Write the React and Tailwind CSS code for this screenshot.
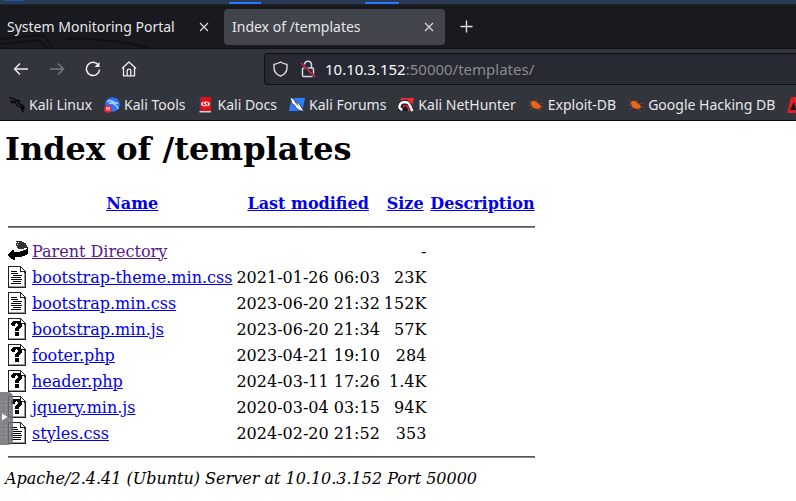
import React from "react";

const bookmarks = [
  { label: "Kali Linux", icon: "dragon" },
  { label: "Kali Tools", icon: "tools" },
  { label: "Kali Docs", icon: "docs" },
  { label: "Kali Forums", icon: "forums" },
  { label: "Kali NetHunter", icon: "nethunter" },
  { label: "Exploit-DB", icon: "bug" },
  { label: "Google Hacking DB", icon: "bug" },
];

const files = [
  { name: "bootstrap-theme.min.css", date: "2021-01-26 06:03", size: "23K", kind: "text" },
  { name: "bootstrap.min.css", date: "2023-06-20 21:32", size: "152K", kind: "text" },
  { name: "bootstrap.min.js", date: "2023-06-20 21:34", size: "57K", kind: "unknown" },
  { name: "footer.php", date: "2023-04-21 19:10", size: "284", kind: "unknown" },
  { name: "header.php", date: "2024-03-11 17:26", size: "1.4K", kind: "unknown" },
  { name: "jquery.min.js", date: "2020-03-04 03:15", size: "94K", kind: "unknown" },
  { name: "styles.css", date: "2024-02-20 21:52", size: "353", kind: "text" },
];

function BookmarkIcon({ kind }) {
  const common = { width: 16, height: 16, viewBox: "0 0 16 16", className: "shrink-0", "aria-hidden": true };
  if (kind === "dragon") {
    return (
      <svg {...common}>
        <path d="M0 1C3 .6 6 1.500 8 3.500L11.500 4.200M1 4.800 5 3.200M2.500 6.300 6.500 4.200M7.500 3.500C5.500 5.500 6.500 8.500 10 9.300 13 9.700 14.800 11 15 13.300M9.500 4C8 6 10 7 11.500 7.300 14 7.800 14.800 9 15.300 11M11.500 10C13 11.500 13.500 13.500 14 15.500" fill="none" stroke="#050608" strokeWidth="1.300" />
      </svg>
    );
  }
  if (kind === "tools") {
    return (
      <svg {...common}>
        <circle cx="8.500" cy="7.500" r="7.300" fill="#2777ff" />
        <path d="M3 4.500C6 3 8.500 4 10 5.500L14 6.500M5 6.500 9 5.500C9 8.500 14 7.500 14 12" fill="none" stroke="#c9dcff" strokeWidth="1.300" />
        <circle cx="3.800" cy="12" r="3.800" fill="#ee2233" />
        <path d="M2 10.800H5.800M3 10.800V13.500M5 10.800V13.500" stroke="#fff" strokeWidth=".9" />
      </svg>
    );
  }
  if (kind === "docs") {
    return (
      <svg {...common}>
        <path d="M2 0H13V14H2Z" fill="#e01218" />
        <path d="M1 0H2.300V14.500H1Z" fill="#203a80" />
        <path d="M1.500 14H13V15.500H1.500Z" fill="#d9d4d4" />
        <path d="M5.500 5 3.500 7 5.500 9M9.500 5 11.500 7 9.500 9M8.800 5.200C5.800 4.800 6.500 6.600 7.500 7S9 9.200 6.200 8.800" fill="none" stroke="#fff" strokeWidth="1.100" />
      </svg>
    );
  }
  if (kind === "forums") {
    return (
      <svg {...common}>
        <path d="M2.500 1H16L13.500 14H0Z" fill="#2b7cff" />
        <path d="M.5 0C3 1 5 2 6.500 4.500L9.500 6.500C12 8 12 11 15.500 14.500L11 13.500C9 12.500 7 11.500 6 9L3 6.500C2 5 2.500 3 .5 0Z" fill="#fff" stroke="#182238" strokeWidth=".8" />
        <path d="M6 4.800 9 8.500" stroke="#222" strokeWidth=".8" />
      </svg>
    );
  }
  if (kind === "nethunter") {
    return (
      <svg {...common}>
        <path d="M3 1H16L13 13.500H0Z" fill="#f02a3a" />
        <path d="M0 7C2 3 6 2 9 3L14 7 11 14H0Z" fill="#15161b" />
        <path d="M4.500 12.800C-.5 12 1 5.500 6.500 5 12 5 11.500 9.500 14.500 14" fill="none" stroke="#fff" strokeWidth="2.400" />
        <path d="M5 10.500C5 8 9 7.500 10 10.500L11 14" fill="none" stroke="#f02a3a" strokeWidth="1.500" />
      </svg>
    );
  }
  return (
    <svg {...common}>
      <path d="M2.500 5.500C4 3.500 7.500 3.500 9.500 6L12.500 8.500 13 10.500 10.500 12C7 12 4.500 11 3.500 8.500Z" fill="#ed6418" />
      <path d="M4 6 1 3M4 8 .5 8.500M5 10 1.500 12.500M9 6 8 2.500M11 7 15 6M12.500 9.500 15.500 10M10 11.500 13 14" stroke="#9c4a24" strokeWidth=".7" fill="none" />
    </svg>
  );
}

function PageShape({ children }) {
  return (
    <svg width="20" height="22" viewBox="0 0 20 22" shapeRendering="crispEdges" className="block" aria-hidden="true">
      <path d="M0 0H13V1H14V2H15V3H16V4H17V5H18V22H0Z" fill="#222" />
      <path d="M1 1H12V6H16V20H1Z" fill="#fff" />
      <path d="M13 2H14V3H15V4H16V5H13Z" fill="#fff" />
      <path d="M16 7H17V21H1V20H16Z" fill="#999" />
      {children}
    </svg>
  );
}

function FileIcon({ kind }) {
  if (kind === "text") {
    return (
      <PageShape>
        <path d="M3 5H9V6H3ZM3 7H10V8H3ZM5 9H14V10H5ZM3 11H13V12H3ZM3 13H14V14H3ZM5 15H13V16H5ZM3 17H13V18H3Z" fill="#000" />
      </PageShape>
    );
  }
  if (kind === "unknown") {
    return (
      <PageShape>
        <path d="M5 3H12V4H13V5H14V9H13V10H12V11H11V13H7V10H8V9H9V8H10V6H9V5H8V6H7V8H4V7H3V5H4V4H5ZM7 14H11V18H7Z" fill="#000" />
      </PageShape>
    );
  }
  return (
    <svg width="20" height="22" viewBox="0 0 20 22" shapeRendering="crispEdges" className="block" aria-hidden="true">
      <path d="M8 1H14V2H16V3H18V5H19V8H16V9H10V8H9V7H8Z" fill="#333" />
      <path d="M8 2H9V3H8ZM9 4H10V5H9ZM8 6H9V7H8ZM10 2H11V3H10Z" fill="#fff" />
      <path d="M20 7V14H19V15H17V16H14V17H7V20H5V19H3V18H2V17H1V16H0V14H1V13H2V12H3V11H4V10H6V12H12V11H15V10H18V9H19V7Z" fill="#000" />
    </svg>
  );
}

function CloseIcon() {
  return (
    <svg width="10" height="10" viewBox="0 0 10 10" aria-hidden="true">
      <path d="M1 1 9 9M9 1 1 9" stroke="#dedee2" strokeWidth="1.100" />
    </svg>
  );
}

function TabBar() {
  return (
    <div className="relative flex h-11 items-center overflow-hidden border-b border-[#0e0f12] bg-[#191a1f] text-sm text-[#e6e6ea]">
      <svg width="220" height="16" viewBox="0 0 220 16" className="absolute bottom-0 left-0" aria-hidden="true">
        <path d="M0 7 44 3 52 16M0 12 38 8 48 16M66 7C95 6 125 10 150 16" fill="none" stroke="#101115" strokeWidth="2" />
      </svg>
      <div className="relative flex w-56 shrink-0 items-center justify-between pr-[15px] pl-[7px]">
        <span>System Monitoring Portal</span>
        <button type="button" aria-label="Close System Monitoring Portal"><CloseIcon /></button>
      </div>
      <div className="relative flex h-9 w-[221px] shrink-0 items-center justify-between rounded-[4px] bg-[#42444b] pr-[11px] pl-2">
        <span>Index of /templates</span>
        <button type="button" aria-label="Close Index of /templates"><CloseIcon /></button>
      </div>
      <button type="button" aria-label="New tab" className="ml-[15px]">
        <svg width="13" height="13" viewBox="0 0 13 13" className="block" aria-hidden="true">
          <path d="M6.500 .5V12.500M.5 6.500H12.500" stroke="#e6e6ea" strokeWidth="1.300" />
        </svg>
      </button>
    </div>
  );
}

function NavBar() {
  return (
    <div className="flex h-10 items-center pl-[13px]">
      <div className="flex w-[251px] shrink-0 items-center gap-5 text-[#f0f0f3]">
        <button type="button" aria-label="Back">
          <svg width="16" height="16" viewBox="0 0 16 16" fill="none" stroke="currentColor" strokeWidth="1.400" className="block"><path d="M15 8H1.500M7 2.500 1.500 8 7 13.500" /></svg>
        </button>
        <button type="button" aria-label="Forward" className="text-[#777980]">
          <svg width="16" height="16" viewBox="0 0 16 16" fill="none" stroke="currentColor" strokeWidth="1.400" className="block"><path d="M1 8H14.500M9 2.500 14.500 8 9 13.500" /></svg>
        </button>
        <button type="button" aria-label="Reload">
          <svg width="16" height="16" viewBox="0 0 16 16" fill="none" stroke="currentColor" strokeWidth="1.500" className="block"><path d="M13.500 4.200A6.600 6.600 0 1 0 14.600 8.500" /><path d="M14.500 1V6H9.500Z" fill="currentColor" stroke="none" /></svg>
        </button>
        <button type="button" aria-label="Home">
          <svg width="16" height="16" viewBox="0 0 16 16" fill="none" stroke="currentColor" strokeWidth="1.300" strokeLinejoin="round" className="block"><path d="M1 7.500 8 1 15 7.500M2.500 6.500V14.800H13.500V6.500" /><path d="M6.200 14.800V9.500Q6.200 8.200 8 8.200T9.800 9.500V14.800" /></svg>
        </button>
      </div>
      <div className="flex h-8 flex-1 items-center rounded-l-[4px] border border-r-0 border-[#101116] bg-[#272933] pl-2">
        <svg width="15" height="16" viewBox="0 0 15 16" fill="none" stroke="#e6e6ea" strokeWidth="1.300" strokeLinejoin="round" className="shrink-0" aria-hidden="true">
          <path d="M7.500 1C5.500 2.300 3.500 3 1 3.400V6.500C1 10.500 3.200 13.500 7.500 15.200 11.800 13.500 14 10.500 14 6.500V3.400C11.500 3 9.500 2.300 7.500 1Z" />
        </svg>
        <svg width="16" height="18" viewBox="0 0 16 18" fill="none" className="ml-3 shrink-0" aria-hidden="true">
          <path d="M4.500 8V5C4.500 0 11.500 0 11.500 5V8M3.500 8H12.500Q13.500 8 13.500 9V15.500Q13.500 16.500 12.500 16.500H3.500Q2.500 16.500 2.500 15.500V9Q2.500 8 3.500 8Z" stroke="#d8d8dd" strokeWidth="1.500" />
          <path d="M1 3 15 17" stroke="#272933" strokeWidth="3" />
          <path d="M1 3 15 17" stroke="#e22850" strokeWidth="1.500" />
        </svg>
        <a href="#url" className="ml-[9px] text-[15px] text-[#8a8b92]">
          <span className="text-[#fbfbfe]">10.10.3.152</span>:50000/templates/
        </a>
      </div>
    </div>
  );
}

function Bookmarks() {
  return (
    <nav aria-label="Bookmarks" className="flex h-[31px] items-center gap-3 overflow-hidden pl-[9px] text-sm whitespace-nowrap text-[#e6e6ea]">
      {bookmarks.map((b) => (
        <a key={b.label} href="#bookmark" className="flex shrink-0 items-center gap-1">
          <BookmarkIcon kind={b.icon} />
          {b.label}
        </a>
      ))}
      <a href="#bookmark" aria-label="OffSec" className="shrink-0">
        <svg width="16" height="16" viewBox="0 0 16 16" className="block" aria-hidden="true">
          <path d="M4 0H16V16H0Z" fill="#e31c22" />
          <path d="M3 13 7 5 9 13Z" fill="#17181d" />
        </svg>
      </a>
    </nav>
  );
}

const link = "text-[#0000ee] underline";

function Rule() {
  return (
    <tr>
      <td colSpan={5} className="p-px">
        <hr className="my-2 h-[2px] border-t border-b border-t-[#555555] border-b-[#888888]" />
      </td>
    </tr>
  );
}

function Listing() {
  return (
    <main className="bg-white px-[5px] pt-[10px] pb-3 font-['DejaVu_Serif',serif] text-base leading-[19px] text-black">
      <h1 className="mb-[21px] text-[32px] leading-[37px] font-bold">Index of /templates</h1>
      <table className="border-separate border-spacing-[2px]">
        <tbody>
          <tr>
            <th className="p-px" aria-label="Type"><div className="h-[22px] w-5" /></th>
            <th className="p-px"><a href="#name" className={link}>Name</a></th>
            <th className="p-px"><a href="#modified" className={link}>Last modified</a></th>
            <th className="p-px"><a href="#size" className={link}>Size</a></th>
            <th className="p-px"><a href="#description" className={link}>Description</a></th>
          </tr>
          <Rule />
          <tr>
            <td className="p-px"><FileIcon kind="back" /></td>
            <td className="p-px"><a href="#parent" className="text-[#551a8b] underline">Parent Directory</a></td>
            <td className="p-px" />
            <td className="p-px text-right">-</td>
            <td className="p-px" />
          </tr>
          {files.map((f) => (
            <tr key={f.name}>
              <td className="p-px"><FileIcon kind={f.kind} /></td>
              <td className="p-px"><a href="#file" className={link}>{f.name}</a></td>
              <td className="p-px text-right whitespace-nowrap">{f.date}</td>
              <td className="p-px text-right">{f.size}</td>
              <td className="p-px" />
            </tr>
          ))}
          <Rule />
        </tbody>
      </table>
      <address>Apache/2.4.41 (Ubuntu) Server at 10.10.3.152 Port 50000</address>
    </main>
  );
}

function SideHandle() {
  return (
    <button type="button" aria-label="Open side panel" className="absolute top-[392px] left-0 h-[53px] w-[13px] rounded-r-[5px] bg-[#6b6d72]/85">
      <svg width="13" height="53" viewBox="0 0 13 53" className="block" aria-hidden="true">
        <path d="M1.500 5V50M5.500 5V50M9.500 5V50" stroke="#a3a4a8" strokeWidth="1" strokeDasharray="1 3" />
        <path d="M2 21.500 7.500 25 2 28.500Z" fill="#fff" />
      </svg>
    </button>
  );
}

export default function App() {
  return (
    <div className="relative min-h-screen overflow-hidden bg-white">
      <header className="border-b border-[#0c0c10] bg-[#33353c] font-['Noto_Sans',sans-serif]">
        <div className="flex h-1 bg-[#293a54]">
          <div className="ml-1 h-px w-5 bg-[#2456a8]" />
          <div className="ml-[205px] h-[2px] w-8 self-end bg-[#2777ff]" />
          <div className="ml-[104px] h-[2px] w-[34px] self-end bg-[#2777ff]" />
        </div>
        <div className="h-px bg-[#202329]" />
        <TabBar />
        <NavBar />
        <Bookmarks />
      </header>
      <Listing />
      <SideHandle />
    </div>
  );
}
